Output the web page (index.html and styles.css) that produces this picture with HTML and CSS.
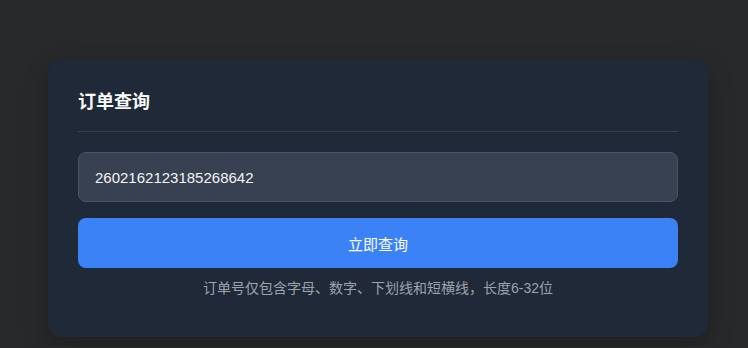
FILE: index.html
```html
<!DOCTYPE html>
<html lang="zh-CN">
<head>
<meta charset="UTF-8" />
<meta name="viewport" content="width=device-width, initial-scale=1" />
<title>订单查询</title>
<link rel="stylesheet" href="styles.css">
</head>
<body>
  <div class="page-wrapper">
    <section class="query-card">
      <h2 class="card-title">订单查询</h2>
      <form class="query-form" onsubmit="return false;">
        <input class="order-input" type="text" value="2602162123185268642" />
        <button class="btn-query" type="submit">立即查询</button>
        <p class="hint">订单号仅包含字母、数字、下划线和短横线，长度6-32位</p>
      </form>
    </section>
  </div>
</body>
</html>
```

FILE: styles.css
```css
body {
  font-family: "Liberation Sans", "Noto Sans CJK SC", Arial, sans-serif;
  background: #28292b;
  margin: 0; padding: 0;
  color: #f3f4f6;
}
.page-wrapper {
  padding: 60px 40px 10px 48px;
}
.query-card {
  width: 660px;
  box-sizing: border-box;
  background: #1f2937;
  border-radius: 14px;
  padding: 30px 30px 39px;
  box-shadow: 0 10px 25px rgb(0 0 0 / 0.25);
}
.card-title {
  margin: 0;
  font-size: 18px;
  line-height: 24px;
  font-weight: 700;
  color: #f9fafb;
  padding-bottom: 17px;
  border-bottom: 1px solid #374151;
}
.query-form {
  margin-top: 20px;
  display: flex;
  flex-direction: column;
  gap: 16px;
}
.order-input {
  height: 50px;
  box-sizing: border-box;
  background: #374151;
  border: 1px solid #4b5563;
  border-radius: 8px;
  padding: 0 16px;
  font-family: inherit;
  font-size: 15px;
  color: #f3f4f6;
  outline: none;
}
.btn-query {
  height: 50px;
  border: none;
  border-radius: 8px;
  background: #3b82f6;
  color: white;
  font-family: inherit;
  font-size: 15px;
  cursor: pointer;
}
.hint {
  margin: -6px 0 0;
  text-align: center;
  font-size: 14px;
  line-height: 20px;
  color: #9ca3af;
}
```
